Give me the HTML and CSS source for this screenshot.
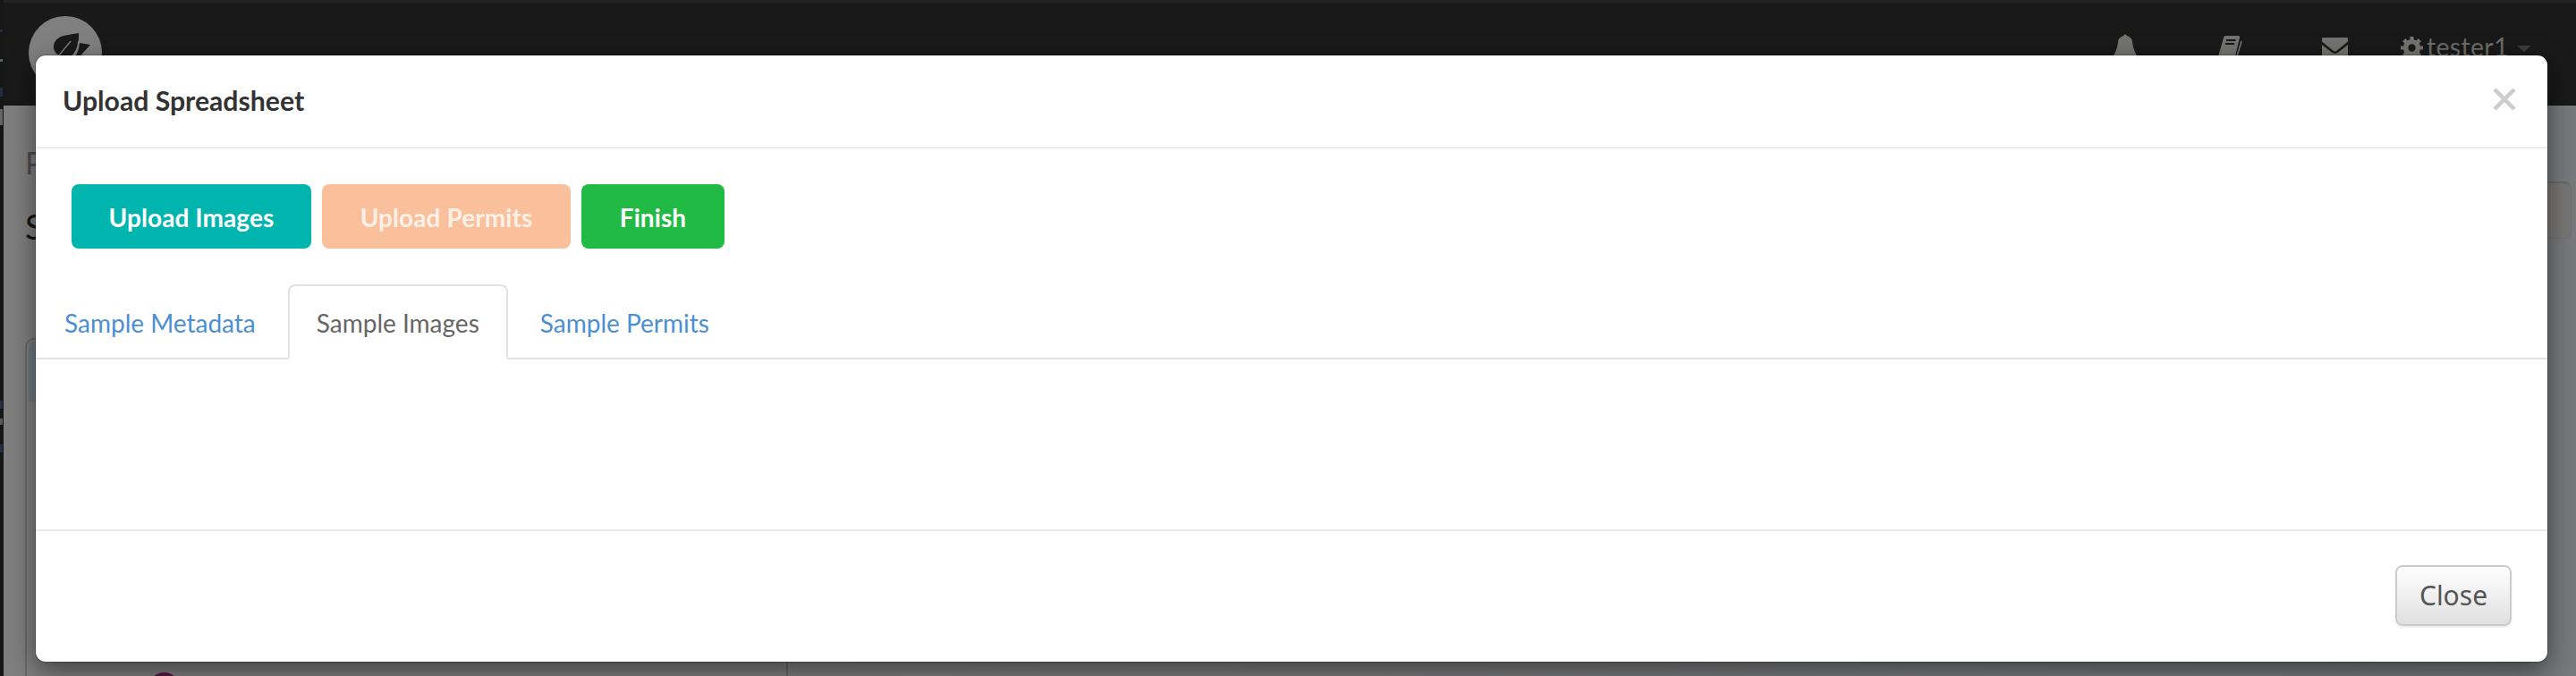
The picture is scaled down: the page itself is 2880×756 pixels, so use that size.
FILE: index.html
```html
<!DOCTYPE html>
<html lang="en">
<head>
<meta charset="utf-8">
<title>Upload Spreadsheet</title>
<link rel="stylesheet" href="styles.css">
</head>
<body>
<div class="screen">
  <div class="edge"><i class="mark m1"></i><i class="mark m2"></i><i class="mark m3"></i><i class="mark m4"></i><i class="mark m5"></i><i class="mark m6"></i><i class="mark m7"></i></div>
  <div class="page">
    <header class="navbar">
      <svg class="logo" viewBox="0 0 84 84"><circle cx="42" cy="42" r="41" fill="#808080"/><path d="M35 45C25 39 28 26 40 23Q50 21 57 20Q58 39 46 48L37 58Z" fill="#191919"/><path d="M34 46L48 29" stroke="#808080" stroke-width="1.3"/><path d="M52 48Q57 40 57 29" stroke="#808080" stroke-width="2" fill="none"/><path d="M58 31L70 33L53 52H49Q57 43 58 31Z" fill="#191919"/></svg>
      <nav class="navicons">
        <svg class="bell" viewBox="0 0 26 32"><path d="M13 0L15 2Q21 4 21 9Q22 18 26 24V26H0V24Q4 18 5 9Q5 4 11 2Z"/></svg>
        <svg class="book" viewBox="0 0 27 32"><path d="M8 0H22Q24.500 0 24 2L19 23H0L6 2Q6.500 0 8 0Z"/><path d="M9 5H19.500M8 9H18" stroke="#191919" stroke-width="1.800"/><path d="M26 6L21 23" stroke="#6d6d6b" stroke-width="1.700" fill="none"/></svg>
        <svg class="mail" viewBox="0 0 26 24"><path d="M0 1Q0 0 1 0H25Q26 0 26 1V4L15 13Q13 14.500 11 13L0 4Z"/><path d="M0 7L10 15Q13 17 16 15L26 7V24H0Z"/></svg>
        <span class="user"><svg class="gear" viewBox="0 0 24 24"><path fill-rule="evenodd" d="M10 0h4v3l3 1 2-2 3 3-2 2 1 3h3v4h-3l-1 3 2 2-3 3-2-2-3 1v3h-4v-3l-3-1-2 2-3-3 2-2-1-3H0v-4h3l1-3-2-2 3-3 2 2 3-1zM12 8a4 4 0 100 8a4 4 0 000-8"/></svg><span class="username">tester1</span><i class="caret"></i></span>
      </nav>
    </header>
    <main class="content">
      <div class="crumb">P</div>
      <div class="heading">S<i class="field"></i></div>
      <section class="panel"><div class="panel-head"></div><i class="badge"></i></section>
    </main>
  </div>
  <div class="modal" role="dialog">
    <div class="modal-header"><h3>Upload Spreadsheet</h3><svg class="dismiss" viewBox="0 0 26 26"><path d="M2 2L24 24M24 2L2 24"/></svg></div>
    <div class="modal-body">
      <div class="actions"><button class="btn teal">Upload Images</button><button class="btn orange">Upload Permits</button><button class="btn green">Finish</button></div>
      <div class="tabs"><a class="tab">Sample Metadata</a><a class="tab active">Sample Images</a><a class="tab">Sample Permits</a></div>
    </div>
    <div class="modal-footer"><button class="close">Close</button></div>
  </div>
</div>
</body>
</html>
```
FILE: styles.css
```css
* { box-sizing: border-box; }
body { margin: 0; font-family: Lato, "Liberation Sans", sans-serif; }
.screen { position: relative; width: 2880px; height: 756px; overflow: hidden; display: flex; background: #7f7f7f; }
.edge { position: relative; width: 4px; background: #151716; }
.mark { position: absolute; left: 0; width: 3px; height: 3px; background: #252d43; }
.m1 { top: 33px; } .m2 { top: 66px; background: #536666; } .m3 { top: 98px; height: 10px; }
.m4 { top: 122px; height: 18px; background: #666; } .m5 { top: 448px; height: 9px; }
.m6 { top: 468px; height: 7px; background: #555b5c; } .m7 { top: 497px; height: 9px; }
.page { flex: 1; display: flex; flex-direction: column; background: linear-gradient(90deg, #7f7f7f, #7d7d7e 50%, #77797c); }
.navbar { height: 118px; flex: none; background: #191919; border-top: 3px solid #222; border-bottom: 1px solid #101010; display: flex; justify-content: space-between; align-items: flex-start; padding: 14px 50px 0 27px; }
.logo { width: 84px; height: 84px; }
.navicons { display: flex; align-items: flex-start; fill: #737371; color: #6c6c6b; padding-top: 21px; }
.bell { width: 26px; height: 32px; margin-right: 91px; }
.book { width: 27px; height: 32px; margin: 2px 89px 0 0; }
.mail { width: 29px; height: 27px; margin: 4px 59px 0 0; }
.user { display: flex; align-items: center; height: 30px; }
.gear { width: 25px; height: 25px; margin-right: 4px; }
.username { font-size: 28.5px; line-height: 30px; width: 101px; margin-top: -3px; white-space: nowrap; letter-spacing: .3px; }
.caret { width: 16px; height: 8px; margin-top: 3px; background: #3d3d3d; clip-path: polygon(0 0, 100% 0, 50% 100%); }
.content { flex: 1; display: flex; flex-direction: column; padding: 45px 5px 0 24px; }
.crumb { height: 40px; font-size: 34px; line-height: 38px; color: #4c4c4c; }
.heading { height: 64px; display: flex; justify-content: space-between; color: #151515; font-size: 38px; line-height: 100px; }
.field { width: 100px; height: 64px; border: 1px solid #70717a; border-top: 2px solid #686868; border-radius: 8px; background: #787775; }
.panel { position: relative; flex: 1; width: 853px; margin-top: 111px; border: 2px solid #696969; border-bottom: 0; border-radius: 10px 10px 0 0; background: #7f7f7f; padding: 2px; }
.panel-head { height: 68px; border-radius: 7px 7px 0 0; background: #6c7980; }
.badge { position: absolute; left: 136px; bottom: -31px; width: 35px; height: 35px; border-radius: 50%; background: #5a1a43; }
.modal { position: absolute; left: 40px; top: 62px; width: 2808px; height: 678px; display: flex; flex-direction: column; border-radius: 11px; background: #fff; box-shadow: 0 0 0 1px rgba(0,0,0,.2), 0 10px 30px rgba(0,0,0,.5); }
.modal-header { height: 104px; border-bottom: 2px solid #ebebeb; display: flex; justify-content: space-between; align-items: center; padding: 0 35px 2px 30px; }
h3 { margin: 0; font-size: 30.2px; line-height: 36px; color: #333; }
.dismiss { width: 26px; height: 26px; margin-bottom: 2px; stroke: #ccc; stroke-width: 4.5; }
.modal-body { height: 428px; border-bottom: 2px solid #e8e8e8; }
.actions { display: flex; gap: 12px; padding: 40px 40px 0; }
.btn { height: 72px; border: 0; padding: 2px 0 0; border-radius: 8px; color: #fff; font: bold 28px/34px Lato, sans-serif; letter-spacing: .08px; }
.teal { width: 268px; background: #00b5ad; } .orange { width: 278px; background: #f9c09b; color: #fef0e7; } .green { width: 160px; background: #21ba45; }
.tabs { display: flex; align-items: flex-end; height: 84px; margin-top: 40px; border-bottom: 2px solid #e2e2e2; }
.tab { height: 82px; margin: 0 4px -2px 0; padding: 22px 30px 0; font-size: 28px; line-height: 34px; color: #4b8fd3; border: 2px solid transparent; white-space: nowrap; }
.tab.active { height: 84px; padding-top: 24px; color: #666; background: #fff; border-color: #e2e2e2; border-bottom-color: #fff; border-radius: 8px 8px 0 0; }
.modal-footer { display: flex; justify-content: flex-end; padding: 38px 40px 0; }
.close { width: 130px; height: 68px; padding: 0; border: 2px solid #ccc; border-radius: 8px; background: linear-gradient(#fff, #e0e0e0); box-shadow: 0 2px 2px #eee; color: #555; font: 30px/38px "Noto Sans", sans-serif; }
```
